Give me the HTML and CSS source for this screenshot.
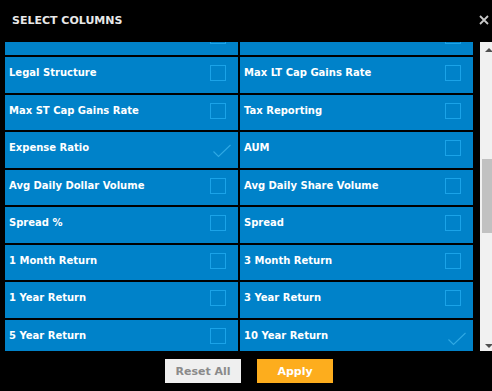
FILE: index.html
```html
<!DOCTYPE html>
<html lang="en">
<head>
    <meta charset="UTF-8">
    <title>Select Columns</title>
    <link rel="stylesheet" href="styles.css">
</head>
<body>
    <!-- Header -->
    <div class="header">
        <div class="title">SELECT COLUMNS</div>
        <svg class="close" width="10" height="10" viewBox="0 0 10 10"><path d="M1 1 L9 9 M9 1 L1 9" stroke="#c8c8c8" stroke-width="1.8"/></svg>
    </div>

    <!-- Column list with scrollbar -->
    <div class="content">
        <div class="list">
            <div class="grid">
                <div class="item"><span class="label"></span><span class="box"></span></div>
                <div class="item"><span class="label"></span><span class="box"></span></div>

                <div class="item"><span class="label">Legal Structure</span><span class="box"></span></div>
                <div class="item"><span class="label">Max LT Cap Gains Rate</span><span class="box"></span></div>

                <div class="item"><span class="label">Max ST Cap Gains Rate</span><span class="box"></span></div>
                <div class="item"><span class="label">Tax Reporting</span><span class="box"></span></div>

                <div class="item"><span class="label">Expense Ratio</span><span class="check"><svg width="22" height="20" viewBox="0 0 22 20"><path d="M3.5 11.5 L8.5 16.5 L20.5 5" fill="none" stroke="#2fa9e4" stroke-width="1.1"/></svg></span></div>
                <div class="item"><span class="label">AUM</span><span class="box"></span></div>

                <div class="item"><span class="label">Avg Daily Dollar Volume</span><span class="box"></span></div>
                <div class="item"><span class="label">Avg Daily Share Volume</span><span class="box"></span></div>

                <div class="item"><span class="label">Spread %</span><span class="box"></span></div>
                <div class="item"><span class="label">Spread</span><span class="box"></span></div>

                <div class="item"><span class="label">1 Month Return</span><span class="box"></span></div>
                <div class="item"><span class="label">3 Month Return</span><span class="box"></span></div>

                <div class="item"><span class="label">1 Year Return</span><span class="box"></span></div>
                <div class="item"><span class="label">3 Year Return</span><span class="box"></span></div>

                <div class="item"><span class="label">5 Year Return</span><span class="box"></span></div>
                <div class="item"><span class="label">10 Year Return</span><span class="check"><svg width="22" height="20" viewBox="0 0 22 20"><path d="M3.5 11.5 L8.5 16.5 L20.5 5" fill="none" stroke="#2fa9e4" stroke-width="1.1"/></svg></span></div>
            </div>
        </div>
        <div class="scrollbar">
            <div class="arrow up"></div>
            <div class="track"><div class="thumb"></div></div>
            <div class="arrow down"></div>
        </div>
    </div>

    <!-- Footer buttons -->
    <div class="footer">
        <button class="reset-btn">Reset All</button>
        <button class="apply-btn">Apply</button>
    </div>
</body>
</html>
```

FILE: styles.css
```css
* {
    margin: 0;
    padding: 0;
    box-sizing: border-box;
}
body {
    font-family: "DejaVu Sans", Verdana, sans-serif;
    background-color: #000;
    color: #fff;
    height: 100vh;
    display: flex;
    flex-direction: column;
    overflow: hidden;
}
/* Header */
.header {
    height: 42px;
    display: flex;
    align-items: center;
    justify-content: space-between;
    padding: 0 3px 2px 12px;
}
.title {
    font-size: 11px;
    font-weight: bold;
    color: #e8e8e8;
}
.close {
    display: block;
    margin-right: 0;
}
/* List area */
.content {
    height: 309px;
    display: flex;
}
.list {
    flex: 1;
    overflow: hidden;
    padding: 0 7px 0 5px;
}
.grid {
    display: grid;
    grid-template-columns: 1fr 1fr;
    grid-auto-rows: 35.5px;
    gap: 2px;
    margin-top: -22.5px;
}
.item {
    background-color: #0082c9;
    display: flex;
    align-items: flex-start;
    justify-content: space-between;
    padding: 8px 12px 0 4px;
}
.label {
    font-size: 10px;
    font-weight: bold;
    line-height: 16px;
    white-space: nowrap;
}
.box {
    width: 16px;
    height: 16px;
    border: 1px solid #1ba3e8;
}
.check {
    width: 16px;
    height: 16px;
    position: relative;
}
.check svg {
    position: absolute;
    left: 0;
    top: 0;
}
/* Scrollbar */
.scrollbar {
    width: 12px;
    background-color: #f1f1f1;
    display: flex;
    flex-direction: column;
}
.arrow {
    height: 17px;
    display: flex;
    align-items: center;
    padding-left: 5px;
}
.arrow::before {
    content: "";
    border-left: 4px solid transparent;
    border-right: 4px solid transparent;
}
.arrow.up::before {
    border-bottom: 4px solid #505050;
    margin-top: -1px;
}
.arrow.down::before {
    border-top: 4px solid #505050;
    margin-top: 6px;
}
.track {
    flex: 1;
    padding-top: 100px;
}
.thumb {
    height: 74px;
    margin-left: 2px;
    background-color: #c1c1c1;
}
/* Footer */
.footer {
    flex: 1;
    display: flex;
    justify-content: center;
    align-items: flex-start;
    gap: 16px;
    padding: 8px 0 0 6px;
}
.footer button {
    width: 76px;
    height: 24px;
    border: none;
    font-family: "DejaVu Sans", Verdana, sans-serif;
    font-size: 11px;
    font-weight: bold;
}
.reset-btn {
    background-color: #efefef;
    color: #8a8a8a;
}
.apply-btn {
    background-color: #fdad1d;
    color: #fff;
}
```
